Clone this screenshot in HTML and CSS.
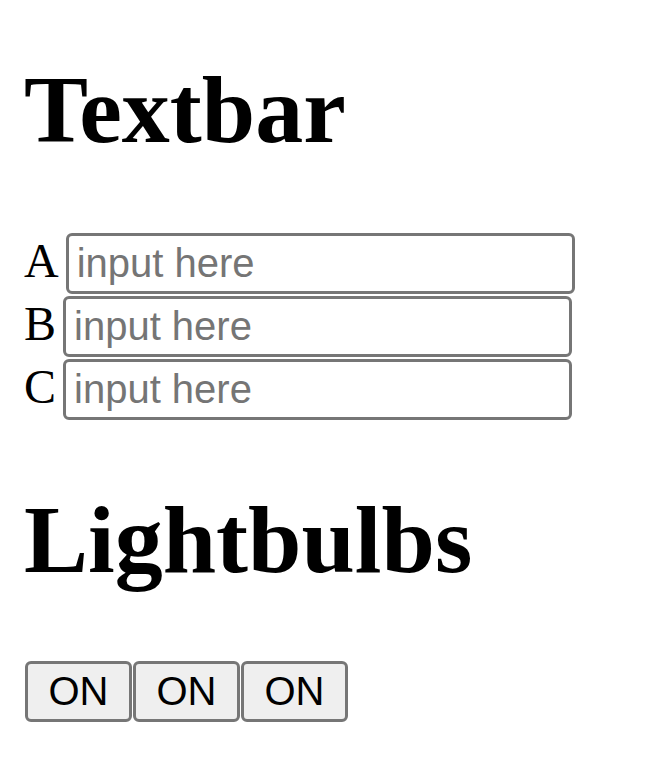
FILE: index.html
```html
<!DOCTYPE html>
<html>
<head>
<meta charset="utf-8">
<title>Textbar</title>
<link rel="stylesheet" href="styles.css">
</head>
<body>
<h1 class="title title-first">Textbar</h1>
<div class="rows">
  <div class="row"><label class="lbl" for="a">A</label><input class="field" id="a" type="text" placeholder="input here"></div>
  <div class="row"><label class="lbl" for="b">B</label><input class="field" id="b" type="text" placeholder="input here"></div>
  <div class="row"><label class="lbl" for="c">C</label><input class="field" id="c" type="text" placeholder="input here"></div>
</div>
<h1 class="title title-second">Lightbulbs</h1>
<div class="bulbs">
  <button class="bulb">ON</button><button class="bulb">ON</button><button class="bulb">ON</button>
</div>
</body>
</html>
```
FILE: styles.css
```css
html, body {
  background: #ffffff;
}
body {
  margin: 0;
  padding: 0 24px;
  font-family: "Liberation Serif", "Times New Roman", serif;
  font-size: 48px;
  color: #000;
}
.title {
  font-family: "Liberation Serif", "Times New Roman", serif;
  font-size: 96px;
  font-weight: bold;
  line-height: 106px;
  margin: 0;
}
.title-first {
  padding-top: 57px;
}
.rows {
  margin-top: 70px;
  display: flex;
  flex-direction: column;
  gap: 2px;
}
.row {
  display: flex;
  align-items: baseline;
  height: 61px;
}
.lbl {
  font-family: "Liberation Serif", "Times New Roman", serif;
  font-size: 48px;
  line-height: 54px;
  margin-right: 7px;
}
.field {
  box-sizing: border-box;
  width: 509px;
  height: 61px;
  margin: 0;
  padding: 0 8px;
  border: 3px solid #767676;
  border-radius: 6px;
  background: #fff;
  font-family: "Liberation Sans", Arial, sans-serif;
  font-size: 40px;
  color: #000;
  outline: none;
}
.field::placeholder {
  color: #757575;
  opacity: 1;
}
.title-second {
  margin-top: 67px;
}
.bulbs {
  margin-top: 68px;
  padding-left: 1px;
  display: flex;
  gap: 1px;
}
.bulb {
  box-sizing: border-box;
  width: 107px;
  height: 61px;
  margin: 0;
  padding: 0;
  border: 3px solid #767676;
  border-radius: 6px;
  background: #efefef;
  font-family: "Liberation Sans", Arial, sans-serif;
  font-size: 40px;
  color: #000;
}
```
